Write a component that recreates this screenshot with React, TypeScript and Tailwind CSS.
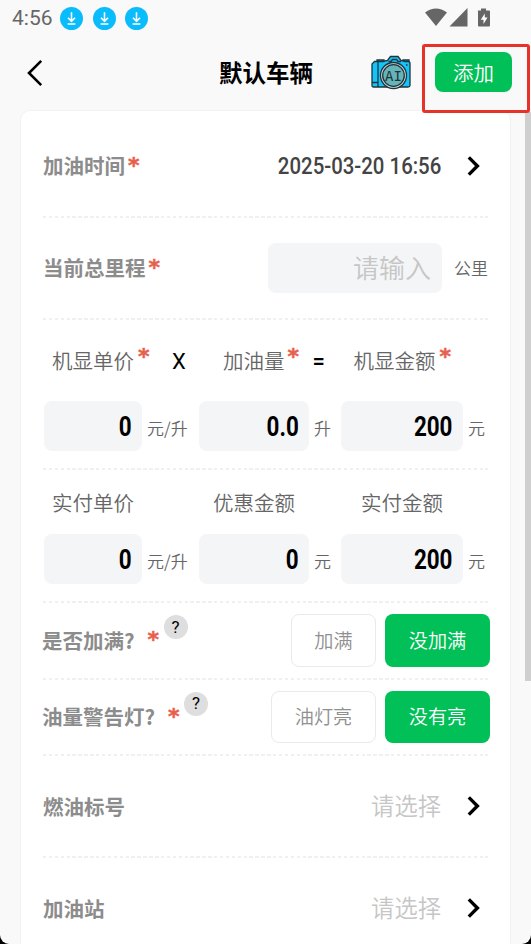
import type { ReactNode } from "react";

function DownloadDot() {
  return (
    <svg className="size-[23px]" viewBox="0 0 22 22" fill="none">
      <circle cx="11" cy="11" r="11" fill="#0bbcfc" />
      <path d="M11 5v8.2M7.6 10.3 11 13.7l3.4-3.4M7.3 16.3h7.4" stroke="#fff" strokeWidth="1.5" />
    </svg>
  );
}

function StatusBar() {
  return (
    <div className="flex h-9 items-center pl-3 pr-10">
      <span className="w-12 font-[Roboto] text-[21px] font-normal leading-9 text-[#666]">4:56</span>
      <div className="flex gap-[9.500px]">
        <DownloadDot />
        <DownloadDot />
        <DownloadDot />
      </div>
      <svg className="ml-auto h-5 w-[66px]" viewBox="0 0 66 20" fill="#666">
        <path d="M0 4.5Q11 -3.5 22 4.5L11 18Z" />
        <path d="M42.500 0V18.500H24.500Z" />
        <path d="M53 2.500h3V.5h5v2h3a1 1 0 0 1 1 1V17.500a1 1 0 0 1-1 1H54a1 1 0 0 1-1-1V3.500a1 1 0 0 1 0-1Z" />
        <path d="M59.800 5.500 55.800 11.800h2.700v4.200l4-6.500h-2.700Z" fill="#fff" />
      </svg>
    </div>
  );
}

function CameraIcon() {
  return (
    <svg className="h-[35px] w-10" viewBox="0 0 40 35" fill="none" stroke="#20343c" strokeWidth="1.3">
      <path d="M6 7V5h7v2M32 7V5h6v2" fill="#17b6ea" />
      <path d="M3.500 6.500H12L16.500 5.500 19.500 1.500h7.500l3 4 4 1h3q2 0 2 2v22q0 1.500-2 1.500H2.500Q1 32 1 30.500V9Z" fill="#13c4fa" />
      <path d="M7 7v25M1 27.500h6M35 10h1.500M17.500 6.500h2.500l1.500-2h4l1.500 2h3" />
      <circle cx="22.500" cy="20.500" r="13" fill="#d2e2e5" />
      <circle cx="22.500" cy="20.500" r="10.800" fill="#67b4b8" />
      <text
        x="22.500"
        y="25.500"
        textAnchor="middle"
        fill="#20343c"
        stroke="none"
        className="font-['DejaVu_Sans_Mono'] text-[14px] font-normal"
      >
        AI
      </text>
    </svg>
  );
}

function Header() {
  return (
    <header className="flex h-[74px] items-center pb-0.5 pl-[27px] pr-[19px]">
      <svg className="mt-0.5 h-7 w-4" viewBox="0 0 16 28" fill="none" stroke="#000" strokeWidth="2.6">
        <path d="M14.200 1.800 2 14l12.200 12.200" />
      </svg>
      <h1 className="ml-[176px] pt-px text-[23.500px] font-bold text-black">默认车辆</h1>
      <div className="ml-auto mr-6">
        <CameraIcon />
      </div>
      <button className="h-10 w-[77px] rounded-lg bg-[#02c058] text-[20.500px] font-[350] text-white">添加</button>
    </header>
  );
}

function Star({ className = "" }: { className?: string }) {
  return (
    <span
      className={`w-[11px] font-['DejaVu_Sans'] text-[22px] font-bold leading-none text-[#e8604c] [-webkit-text-stroke:0.5px_#e8604c] ${className}`}
    >
      *
    </span>
  );
}

function Divider() {
  return (
    <div className="h-0.5 shrink-0 bg-[repeating-linear-gradient(90deg,#f0f0f0_0,#f0f0f0_3.4px,transparent_3.4px,transparent_5.900px)]" />
  );
}

function Chevron() {
  return (
    <svg className="ml-[26px] mr-2 h-5 w-[13px]" viewBox="0 0 13 20" fill="none" stroke="#000" strokeWidth="3.4">
      <path d="M1.800 1.400 10.400 10l-8.600 8.600" />
    </svg>
  );
}

function Label({ children }: { children: ReactNode }) {
  return <span className="text-[20.500px] font-bold text-[#8c8c8c]">{children}</span>;
}

function NumberBox({ value, width, unit }: { value: string; width: string; unit: string }) {
  return (
    <>
      <div className={`flex h-[50px] items-center justify-end rounded-lg bg-[#f4f5f7] pr-[10.500px] pt-0.5 ${width}`}>
        <span className="origin-right scale-x-[.83] font-[Roboto] text-[27px] font-bold text-black">{value}</span>
      </div>
      <span className="ml-[5px] pt-1 text-[17px] text-[#666]">{unit}</span>
    </>
  );
}

function AmountRow({ values, units }: { values: string[]; units: string[] }) {
  return (
    <div className="flex items-center pl-px">
      <div className="flex w-[155px] items-center">
        <NumberBox value={values[0]} unit={units[0]} width="w-[98px]" />
      </div>
      <div className="flex w-[142px] items-center">
        <NumberBox value={values[1]} unit={units[1]} width="w-[110px]" />
      </div>
      <div className="flex items-center">
        <NumberBox value={values[2]} unit={units[2]} width="w-[122px]" />
      </div>
    </div>
  );
}

function ChoiceRow({ label, options, widths }: { label: string; options: [string, string]; widths: string }) {
  return (
    <div className="-ml-px flex h-[74.500px] items-center">
      <Label>{label}</Label>
      <Star className="ml-[13px]" />
      <span className="mb-[26px] ml-[5px] flex size-6 items-center justify-center rounded-full bg-[#dedede] font-[Roboto] text-[17px] font-normal text-black">
        ?
      </span>
      <button
        className={`ml-auto h-[52.500px] rounded-lg border border-[#e8eaeb] text-[19.200px] font-[350] text-[#909090] ${widths}`}
      >
        {options[0]}
      </button>
      <button className="-mr-0.5 ml-[9px] h-[52.500px] w-[105px] rounded-lg bg-[#02c058] text-[19.200px] font-[350] text-white">
        {options[1]}
      </button>
    </div>
  );
}

function SelectRow({ label }: { label: string }) {
  return (
    <div className="flex h-[100px] items-center">
      <Label>{label}</Label>
      <span className="ml-auto pb-px text-[23.300px] font-[350] text-[#c6c6c6]">请选择</span>
      <Chevron />
    </div>
  );
}

export default function App() {
  return (
    <div className="h-[944px] w-[531px] overflow-hidden bg-black">
      <div className="relative h-full overflow-hidden rounded-b-[9px] bg-[#f9f9f9] font-['Noto_Sans_CJK_SC',sans-serif] font-[350]">
        <StatusBar />
        <Header />

        <main className="mx-5 h-[860px] w-[491px] rounded-t-[10px] border border-[#f2f2f2] bg-white pl-[22px] pr-[22px]">
          <div className="flex h-[105px] items-center pt-1">
            <Label>加油时间</Label>
            <Star className="ml-[3px]" />
            <span className="ml-auto origin-right scale-x-[.85] whitespace-nowrap pt-px font-[Roboto] text-[24px] font-medium text-[#444]">
              2025-03-20 16:56
            </span>
            <Chevron />
          </div>
          <Divider />

          <div className="flex h-[100px] items-center pb-px">
            <Label>当前总里程</Label>
            <Star className="ml-[3px]" />
            <div className="ml-auto flex h-[50px] w-[174px] items-center justify-end rounded-lg bg-[#f4f5f7] pb-[3px] pr-[11px] text-[26px] text-[#c6c6c6]">
              请输入
            </div>
            <span className="ml-3 text-[17px] text-[#666]">公里</span>
          </div>
          <Divider />

          {/* pump price x litres = pump total */}
          <div className="h-[148px]">
            <div className="flex h-[81px] items-center pl-[9px] text-[20.500px] text-[#666]">
              <span>机显单价</span>
              <Star className="mb-2 ml-1" />
              <span className="ml-[23px] w-[51px] pt-0.5 font-[Roboto] text-[22px] font-normal text-black">X</span>
              <span>加油量</span>
              <Star className="mb-2 ml-[3px]" />
              <span className="ml-[14px] w-[41px] pt-px font-[Roboto] text-[22px] font-medium text-black">=</span>
              <span>机显金额</span>
              <Star className="mb-2 ml-1" />
            </div>
            <AmountRow values={["0", "0.0", "200"]} units={["元/升", "升", "元"]} />
          </div>
          <Divider />

          <div className="h-[131px]">
            <div className="flex h-16 items-center pl-[9px] text-[20.500px] text-[#666]">
              <span className="w-[161px]">实付单价</span>
              <span className="w-[148px]">优惠金额</span>
              <span>实付金额</span>
            </div>
            <AmountRow values={["0", "0", "200"]} units={["元/升", "元", "元"]} />
          </div>
          <Divider />

          <ChoiceRow label="是否加满?" options={["加满", "没加满"]} widths="w-[85px]" />
          <Divider />
          <ChoiceRow label="油量警告灯?" options={["油灯亮", "没有亮"]} widths="w-[105px]" />
          <Divider />
          <SelectRow label="燃油标号" />
          <Divider />
          <SelectRow label="加油站" />
        </main>

        {/* scrollbar */}
        <div className="absolute right-0 top-28 h-[569px] w-1.5 bg-[#cfcfcf]" />
        {/* highlight round the add button */}
        <div className="absolute left-[422px] top-11 h-[69px] w-[108px] rounded-[3px] border-[3px] border-[#e63228]" />
      </div>
    </div>
  );
}
